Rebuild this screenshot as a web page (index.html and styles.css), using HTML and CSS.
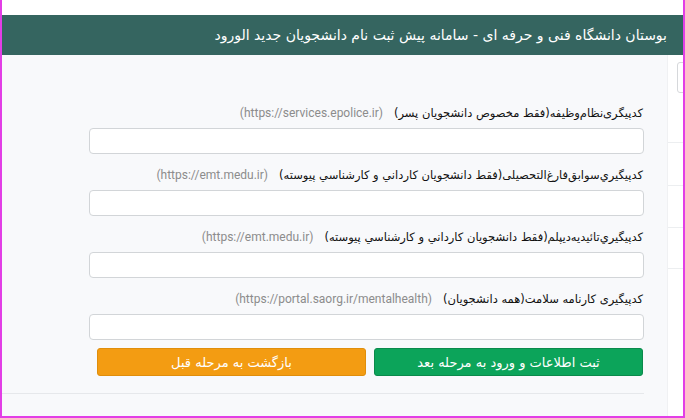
FILE: index.html
```html
<!DOCTYPE html>
<html lang="fa">
<head>
<meta charset="utf-8">
<link rel="stylesheet" href="styles.css">
</head>
<body>
<div class="frame">
  <div class="topstrip"></div>
  <header class="header">بوستان دانشگاه فنی و حرفه ای - سامانه پیش ثبت نام دانشجویان جدید الورود</header>
  <div class="main">
    <aside class="side">
      <div class="side-box"></div>
      <div class="side-line l1"></div>
      <div class="side-line l2"></div>
      <div class="side-line l3"></div>
      <div class="side-line l4"></div>
    </aside>
    <section class="content">
      <div class="form">
        <div class="group">
          <div class="label"><span class="lbl">کدپیگری‌نظام‌وظیفه(فقط مخصوص دانشجویان پسر)</span><span class="url">(https://services.epolice.ir)</span></div>
          <div class="input"></div>
        </div>
        <div class="group">
          <div class="label"><span class="lbl">کدپیگيري‌سوابق‌فارغ‌التحصیلی(فقط دانشجويان كارداني و كارشناسي پيوسته)</span><span class="url">(https://emt.medu.ir)</span></div>
          <div class="input"></div>
        </div>
        <div class="group">
          <div class="label"><span class="lbl">کدپیگيري‌تائیدیه‌دیپلم(فقط دانشجويان كارداني و كارشناسي پيوسته)</span><span class="url">(https://emt.medu.ir)</span></div>
          <div class="input"></div>
        </div>
        <div class="group last">
          <div class="label"><span class="lbl">کدپیگیری کارنامه سلامت(همه دانشجویان)</span><span class="url">(https://portal.saorg.ir/mentalhealth)</span></div>
          <div class="input"></div>
        </div>
        <div class="buttons">
          <div class="btn green">ثبت اطلاعات و ورود به مرحله بعد</div>
          <div class="btn orange">بازگشت به مرحله قبل</div>
        </div>
      </div>
      <div class="rule"></div>
    </section>
  </div>
</div>
</body>
</html>
```
FILE: styles.css
```css
html, body {
  margin: 0;
  padding: 0;
  background: #ffffff;
}
.frame {
  width: 685px;
  height: 418px;
  box-sizing: border-box;
  border-left: 2px solid #e23ee6;
  border-right: 2px solid #e23ee6;
  border-bottom: 2px solid #e23ee6;
  display: flex;
  flex-direction: column;
  overflow: hidden;
  font-family: "DejaVu Sans", sans-serif;
}
.topstrip {
  height: 15px;
  background: #ffffff;
}
.header {
  height: 40px;
  line-height: 40px;
  background: #356560;
  color: #ffffff;
  direction: rtl;
  padding-right: 16px;
  font-size: 14px;
  white-space: nowrap;
}
.main {
  flex: 1;
  display: flex;
  flex-direction: row-reverse;
}
.side {
  width: 15px;
  background: #ffffff;
  position: relative;
  border-left: 1px solid #f0f1f3;
}
.side-box {
  position: absolute;
  left: 9px;
  top: 7px;
  width: 10px;
  height: 29px;
  border: 1px solid #d6d8db;
  border-radius: 3px;
  background: #fff;
}
.side-line {
  position: absolute;
  left: 0;
  right: 0;
  height: 1px;
  background: #eceef0;
}
.l1 { top: 87px; }
.l2 { top: 130px; }
.l3 { top: 172px; }
.l4 { top: 213px; }
.content {
  flex: 1;
  background: #f8f9fb;
  padding: 48px 23px 0 87px;
  direction: rtl;
}
.form {
  display: flex;
  flex-direction: column;
}
.group {
  margin-bottom: 11px;
}
.group.last {
  margin-bottom: 8px;
}
.label {
  height: 20px;
  line-height: 20px;
  margin-bottom: 5px;
  display: flex;
  align-items: center;
  gap: 11px;
  white-space: nowrap;
  padding-right: 1px;
}
.lbl {
  font-size: 11.5px;
  color: #111111;
}
.url {
  direction: ltr;
  font-family: Roboto, "Liberation Sans", sans-serif;
  font-size: 12px;
  color: #8c8c8c;
}
.input {
  height: 26px;
  box-sizing: border-box;
  background: #ffffff;
  border: 1px solid #d2d5d8;
  border-radius: 4px;
}
.buttons {
  display: flex;
  gap: 8px;
  padding-left: 8px;
  padding-right: 1px;
}
.btn {
  flex: 1;
  height: 28px;
  line-height: 28px;
  text-align: center;
  color: #ffffff;
  font-size: 13px;
  border-radius: 3px;
  box-sizing: border-box;
}
.green {
  background: #0ca45a;
  border: 1px solid #0a8a4b;
}
.orange {
  background: #f39c12;
  border: 1px solid #e08e0b;
}
.rule {
  height: 1px;
  background: #e6e8eb;
  margin: 17px 0 0 0;
  margin-left: -87px;
}
```
